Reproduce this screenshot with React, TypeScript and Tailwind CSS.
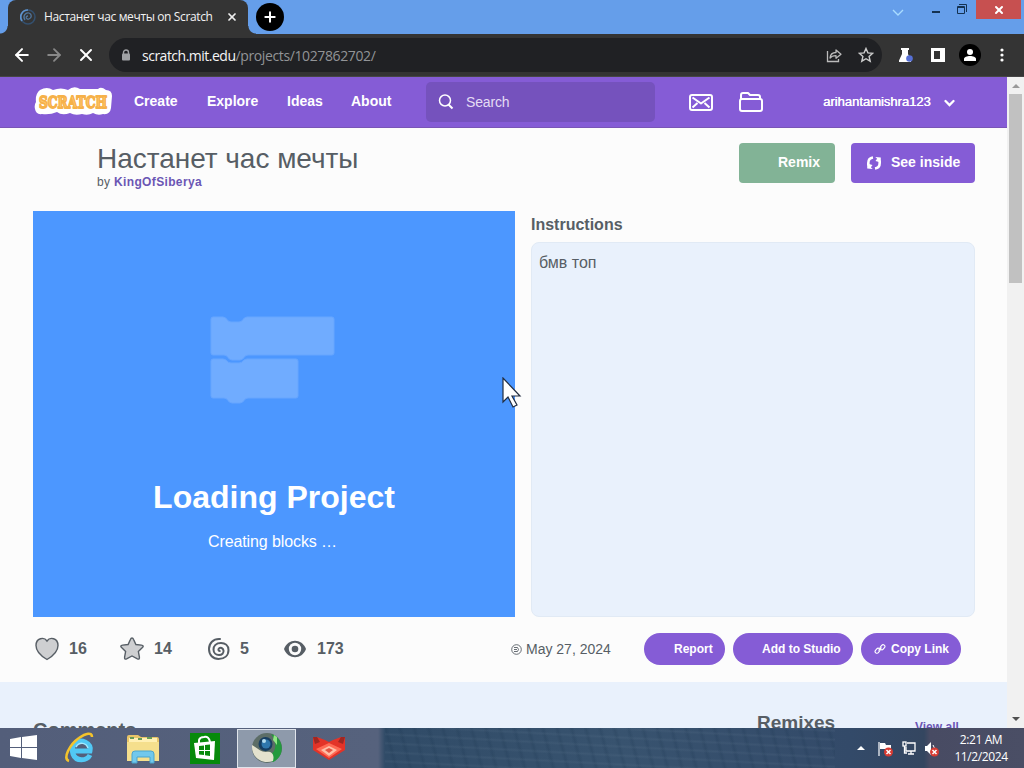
import type { ReactNode } from "react";
import { ArrowLeft, ArrowRight, X, Plus } from "lucide-react";

const stageFont = "font-['Liberation_Sans',Arial,sans-serif]";
const systemFont = "font-['Open_Sans','Noto_Sans',sans-serif]";

const TabStrip = () => (
  <div className="flex h-[34px] shrink-0 items-start bg-[#659eea]">
    <div className="flex h-[34px] w-[8px] items-end">
      <div className="h-2 w-2 bg-[radial-gradient(circle_at_0_0,#659eea_7px,#343434_8px)]" />
    </div>
    <div className="flex h-[34px] w-[240px] items-center rounded-t-[8px] bg-[#343434] pl-3">
      <svg width="16" height="16" viewBox="0 0 16 16" fill="none">
        <circle cx="8" cy="8" r="7" stroke="#34506f" strokeWidth="1.5" />
        <path d="M2 12A7 7 0 0 1 8 1" stroke="#5f92cc" strokeWidth="1.7" />
        <path d="M5 11c-3-4 1-8 4-7s3 5 0 6-4-3-1-3" stroke="#52779f" strokeWidth="1.3" />
      </svg>
      <span className="ml-2 w-[170px] whitespace-nowrap text-[12px] tracking-[-0.37px] text-[#f2f2f2]">
        Настанет час мечты on Scratch
      </span>
      <X className="ml-[12px]" size={12} strokeWidth={3.5} color="#eee" />
    </div>
    <div className="flex h-[34px] w-[8px] items-end">
      <div className="h-2 w-2 bg-[radial-gradient(circle_at_100%_0,#659eea_7px,#343434_8px)]" />
    </div>
    <div className="mt-[3px] flex h-7 w-7 items-center justify-center rounded-full bg-black">
      <Plus size={16} strokeWidth={3} color="white" />
    </div>
    <svg className="ml-auto mt-[9px]" width="12" height="8" viewBox="0 0 12 8" fill="none">
      <path d="M1 1l5 5 5-5" stroke="#a9dcff" strokeWidth="1.4" />
    </svg>
    <div className="ml-[28px] mt-[11px] h-[2px] w-[8px] bg-[#143252]" />
    <svg className="ml-[17px] mt-1" width="11" height="10" viewBox="0 0 11 10" fill="none" stroke="#143252">
      <path d="M.5 2.5h7v7h-7zM.5 3.5h7" />
      <path d="M2 .5h7.5V8" />
    </svg>
    <div className="ml-[8px] flex h-[19px] w-[45px] items-center justify-center bg-[#c75050]">
      <X size={12} strokeWidth={4} color="white" />
    </div>
    <div className="w-[3px]" />
  </div>
);

const AddressBar = () => (
  <div className="flex h-[43px] shrink-0 items-center border-b border-[#464646] bg-[#343434]">
    <ArrowLeft className="ml-[12px]" size={20} strokeWidth={2.4} color="white" />
    <ArrowRight className="ml-[12px]" size={20} strokeWidth={2.2} color="#888" />
    <X className="ml-[12px]" size={20} strokeWidth={2.4} color="white" />
    <div className="ml-[13px] flex h-[34px] w-[773px] items-center rounded-full bg-[#202124] pl-[12px]">
      <svg width="10" height="12" viewBox="0 0 10 12">
        <path d="M2.5 5V3.5a2.5 2.5 0 0 1 5 0V5" fill="none" stroke="#a0a2a5" strokeWidth="1.4" />
        <rect x="1" y="4.5" width="8" height="7" rx="1" fill="#a0a2a5" />
      </svg>
      <span className="ml-[11px] whitespace-nowrap text-[14px] text-[#929497]">
        <span className="tracking-[-0.5px] text-[#f5f5f5]">scratch.mit.edu</span>
        <span className="tracking-[-0.38px]">/projects/1027862702/</span>
      </span>
      <svg className="ml-auto" width="16" height="16" viewBox="0 0 16 16" fill="none" stroke="#bbb" strokeWidth="1.3">
        <path d="M1.5 4v10.5h11V12" />
        <path d="M4 11c.4-4 2.5-5.500 6-5.500V3l5 4.200-5 4V8.700C7.500 8.700 5.500 9 4 11z" strokeLinejoin="round" />
      </svg>
      <svg className="ml-[16px] mr-[8px]" width="16" height="16" viewBox="0 0 16 16" fill="none">
        <path d="M8 1.500l1.900 4.400 4.800.4-3.600 3.200 1.100 4.700L8 11.700l-4.200 2.500 1.100-4.700L1.300 6.300l4.800-.4z" stroke="#ccc" strokeWidth="1.400" />
      </svg>
    </div>
    <svg className="ml-[17px]" width="15" height="16" viewBox="0 0 15 16">
      <path d="M2 1h8v2H9v4l3 6.500V15H0v-1.500L3 7V3H2z" fill="white" />
      <circle cx="10.500" cy="11.500" r="3.300" fill="#566fd4" />
    </svg>
    <svg className="ml-[17px]" width="14" height="14" viewBox="0 0 14 14">
      <path d="M0 0h14v14H0zM3 3v8h6V3z" fill="white" fillRule="evenodd" />
    </svg>
    <div className="ml-[14px] flex h-[22px] w-[22px] items-center justify-center rounded-full bg-black">
      <svg width="14" height="14" viewBox="0 0 14 14" fill="white">
        <circle cx="7" cy="4" r="3" />
        <path d="M1 13v-2c0-4 12-4 12 0v2z" />
      </svg>
    </div>
    <svg className="ml-[19px]" width="4" height="14" viewBox="0 0 4 14" fill="white">
      <circle cx="2" cy="2" r="1.600" />
      <circle cx="2" cy="7" r="1.600" />
      <circle cx="2" cy="12" r="1.600" />
    </svg>
  </div>
);

const ScratchLogo = () => (
  <svg width="80" height="32" viewBox="0 0 80 32">
    <path
      d="M7 4q7-4 13 0 8-3 15 0 6-5 12-1h18q3-3 8 1 6 0 6 6l-1 12q-1 7-8 6-5 2-10-1-5 3-11 1-7 2-12-1-8 3-13-1-7 3-15 2-6 1-7-5-1-4 1-7-1-8 4-12z"
      fill="white"
    />
    <text
      x="6"
      y="22"
      textLength="68"
      lengthAdjust="spacingAndGlyphs"
      fontFamily="DejaVu Serif, serif"
      fontWeight="bold"
      fontSize="17"
      fill="#ffc76f"
      stroke="#f6b149"
      strokeWidth="1.800"
      strokeLinejoin="round"
    >
      SCRATCH
    </text>
  </svg>
);

const NavBar = () => (
  <nav className="flex h-[51px] items-center border-b border-[#7955b6] bg-[#855cd6] text-[14px] font-bold leading-5 text-white">
    <div className="ml-[33px] w-[101px] pb-px">
      <ScratchLogo />
    </div>
    <span className="w-[73px] pb-[2px]">Create</span>
    <span className="w-[80px] pb-[2px]">Explore</span>
    <span className="w-[64px] pb-[2px]">Ideas</span>
    <span className="w-[75px] pb-[2px]">About</span>
    <div className="flex h-10 w-[229px] items-center rounded-[5px] bg-[#7552bd] pl-[12px] font-normal text-[#e4dcf4]">
      <svg width="16" height="16" viewBox="0 0 16 16" fill="none" stroke="white" strokeWidth="1.500">
        <circle cx="7" cy="6.500" r="5.500" />
        <path d="M10.500 10.500l4 4" strokeWidth="2" />
      </svg>
      <span className="ml-[12px] tracking-[-0.15px]">Search</span>
    </div>
    <svg className="ml-[34px]" width="24" height="17" viewBox="0 0 24 17" fill="none" stroke="white" strokeWidth="2">
      <rect x="1" y="1" width="22" height="15" rx="2" />
      <path d="M3.500 3.500l8.500 6 8.500-6M3.500 13.500l5-4.500M20.500 13.500l-5-4.500" strokeLinejoin="round" />
    </svg>
    <svg className="ml-[26px]" width="24" height="20" viewBox="0 0 24 20" fill="none" stroke="white" strokeWidth="2" strokeLinejoin="round">
      <path d="M2 7V3q0-2 2-2h5l2 2h8q2 0 2 2v2" />
      <path d="M3 7h18q2 0 2 2v8q0 2-2 2H3q-2 0-2-2V9q0-2 2-2z" />
    </svg>
    <span className="ml-[60px] w-[121px] whitespace-nowrap text-[13px] font-normal [text-shadow:0.4px_0_0_white]">
      arihantamishra123
    </span>
    <svg className="mt-px" width="11" height="8" viewBox="0 0 11 8" fill="none">
      <path d="M1.500 2l4 4 4-4" stroke="white" strokeWidth="2.300" strokeLinecap="round" />
    </svg>
  </nav>
);

const ProjectHeader = () => (
  <div className="flex h-[83px] items-start pl-[97px]">
    <div className="w-[642px] pt-[14px]">
      <h1 className="h-[32px] whitespace-nowrap text-[28px] leading-[33px] tracking-[-0.03px]">Настанет час мечты</h1>
      <div className="text-[12px] leading-[17px] tracking-[0.35px]">
        by <span className="font-bold text-[#6b56b4]">KingOfSiberya</span>
      </div>
    </div>
    <div className="mt-[15px] h-10 w-24 rounded-[4px] bg-[#82b396] pl-[39px] text-[14px] font-bold leading-[38px] text-white">
      Remix
    </div>
    <div className="ml-4 mt-[15px] flex h-10 w-[124px] items-center rounded-[4px] bg-[#855cd6] pl-[15px] text-[14px] font-bold text-white">
      <svg width="16" height="14" viewBox="0 0 16 14" fill="none" stroke="white" strokeWidth="2.600">
        <path d="M7 1.500C3.500 2 2.300 4.500 2.300 7v2.500" />
        <path d="M1.200 7.500v5l5.500.5-1.800-1.800L6.500 9z" fill="white" stroke="none" />
        <path d="M9 12.500c3.500-.5 4.700-3 4.700-5.500V4.500" />
        <path d="M14.800 6.500v-5L9.300 1l1.800 1.800L9.500 5z" fill="white" stroke="none" />
      </svg>
      <span className="ml-[9px] whitespace-nowrap pb-[2px]">See inside</span>
    </div>
  </div>
);

const LoadingStage = () => (
  <div className="flex h-[406px] w-[482px] flex-col items-center bg-[#4c97ff] text-white">
    <svg className="mr-[3px] mt-[105px] shrink-0" width="126" height="91" viewBox="0 0 126 91">
      <g transform="translate(1 1)" fill="#70acff" stroke="#66a6ff">
        <path d="M2 0h10c4 0 4 5 8 5h8c4 0 4-5 8-5h85q2 0 2 2v34q0 2-2 2H37c-4 0-4 5-8 5h-8c-4 0-4-5-8-5H2q-2 0-2-2V2q0-2 2-2z" />
        <path d="M2 42h10c4 0 4 4 8 4h8c4 0 4-4 8-4h49q2 0 2 2v35q0 2-2 2H37c-4 0-4 5-8 5h-8c-4 0-4-5-8-5H2q-2 0-2-2V44q0-2 2-2z" />
      </g>
    </svg>
    <h2 className="mt-[71px] text-[32px] font-bold leading-[38px]">Loading Project</h2>
    <p className="mr-[3px] mt-[17px] text-[16px] leading-[18px] tracking-[-0.1px]">Creating blocks …</p>
  </div>
);

const Stat = ({ icon, count, width }: { icon: ReactNode; count: number; width: string }) => (
  <div className={`flex items-center gap-[9px] ${width}`}>
    {icon}
    <span>{count}</span>
  </div>
);

const ProjectStats = () => (
  <div className="flex h-[65px] items-center pb-px pl-[34px] text-[16px] font-bold">
    <Stat
      width="w-[85px]"
      count={16}
      icon={
        <svg width="26" height="24" viewBox="0 0 26 24">
          <path d="M13 4C10-.5 2 1 2 8.500c0 6 5 10.500 11 14 6-3.500 11-8 11-14C24 1 16-.5 13 4z" fill="#cecfd1" stroke="#575e65" strokeWidth="1.400" />
        </svg>
      }
    />
    <Stat
      width="w-[89px]"
      count={14}
      icon={
        <svg width="26" height="26" viewBox="0 0 26 26">
          <path d="M13 2q1 0 1.600 1.500l2.300 5 5.500.6q3 .4 1 2.500l-4 4 1 5.500q.3 2.700-2 1.700L13 20l-5.400 2.800q-2.300 1-2-1.700l1-5.500-4-4q-2-2.100 1-2.500l5.500-.6 2.300-5Q12 2 13 2z" fill="#cecfd1" stroke="#575e65" strokeWidth="1.400" />
        </svg>
      }
    />
    <Stat
      width="w-[75px]"
      count={5}
      icon={
        <svg width="23" height="24" viewBox="0 0 23 24" fill="none" stroke="#575e65" strokeWidth="2" strokeLinecap="round">
          <path d="M12 2C5 1.500 1 6.500 1 12c0 6 4 10 9.500 10 6 0 10-3.500 10-9 0-4.500-3.500-7-7.500-7-5 0-7.500 3-7.500 6.500s2.500 5.500 5.500 5.500 5-2 4.500-4.500C15 11 12.500 10 11 11.500c-1 1-.7 2.500.7 2.600" />
        </svg>
      }
    />
    <Stat
      width="w-[228px]"
      count={173}
      icon={
        <svg className="mr-px" width="24" height="20" viewBox="0 0 24 20">
          <path d="M1 10C5-1 19-1 23 10 19 21 5 21 1 10z" fill="#575e65" />
          <circle cx="12" cy="10" r="6.200" fill="#fcfcfc" />
          <circle cx="12" cy="10" r="3.300" fill="#575e65" />
        </svg>
      }
    />
    <div className="flex w-[133px] items-center text-[14px] font-normal">
      <svg className="mr-[4px]" width="11" height="11" viewBox="0 0 11 11" fill="none" stroke="#575e65">
        <circle cx="5.500" cy="5.500" r="4.800" strokeWidth=".9" />
        <path d="M3 3.500h3.500q2 2 0 4H3M3 5.500h3" strokeWidth=".9" />
      </svg>
      May 27, 2024
    </div>
    <div className="flex gap-2 whitespace-nowrap text-[12px] text-white">
      <div className="h-8 w-[81px] rounded-full bg-[#855cd6] pl-[30px] leading-[32px]">Report</div>
      <div className="h-8 w-[120px] rounded-full bg-[#855cd6] pl-[29px] leading-[32px]">Add to Studio</div>
      <div className="flex h-8 w-[100px] items-center rounded-full bg-[#855cd6] pl-[13px]">
        <svg className="mr-[5px]" width="12" height="12" viewBox="0 0 12 12" fill="none" stroke="white" strokeWidth="1.100">
          <rect x=".8" y="6" width="5.500" height="3.600" rx="1.800" transform="rotate(-50 3.500 7.800)" />
          <rect x="5.700" y="2.400" width="5.500" height="3.600" rx="1.800" transform="rotate(-50 8.500 4.200)" />
          <path d="M4.500 7.500l3-3" />
        </svg>
        <span className="pb-px">Copy Link</span>
      </div>
    </div>
  </div>
);

const ScrollBar = () => (
  <div className="flex w-[17px] flex-col items-center bg-[#f1f1f1]">
    <div className="mt-[7px] border-x-[4px] border-b-[4px] border-x-transparent border-b-[#999]" />
    <div className="mt-[6px] h-[189px] w-[13px] bg-[#c1c1c1]" />
    <div className="mb-[7px] mt-auto border-x-[4px] border-t-[4px] border-x-transparent border-t-[#505050]" />
  </div>
);

const ScratchPage = () => (
  <div className={`flex h-[651px] shrink-0 overflow-hidden bg-[#fcfcfc] text-[#575e65] ${stageFont}`}>
    <main className="h-[651px] w-[1007px] overflow-hidden">
      <NavBar />
      <ProjectHeader />
      <div className="flex pl-[33px]">
        <LoadingStage />
        <div className="ml-4 w-[444px]">
          <h3 className="h-[31px] pt-[4px] text-[16px] font-bold leading-[20px]">Instructions</h3>
          <div className="h-[375px] rounded-[8px] border border-[#e1eaf5] bg-[#e9f1fc] px-[7px] pt-[10px] text-[16px] leading-5">
            бмв топ
          </div>
        </div>
      </div>
      <ProjectStats />
      <section className="flex h-[46px] items-start overflow-hidden bg-[#e9f1fc] font-bold">
        <h3 className="ml-[33px] mt-[36px] w-[724px] text-[20px] leading-6">Comments</h3>
        <h3 className="mt-[29px] w-[158px] text-[19px] leading-6">Remixes</h3>
        <span className="mt-[37px] whitespace-nowrap text-[12px] leading-4 text-[#6b56b4]">View all</span>
      </section>
    </main>
    <ScrollBar />
  </div>
);

const WindowsIcon = () => (
  <svg width="28" height="26" viewBox="0 0 28 26" fill="white">
    <path d="M0 4l11-2v10H0zM12 2l15-2v12H12zM0 13h11v10L0 21zM12 13h15v12l-15-2z" />
  </svg>
);

const ExplorerIcon = () => (
  <svg width="32" height="32" viewBox="0 0 32 32" fill="none">
    <path d="M26 23c-3 6-14 7-17-1-3-9 5-15 12-12 4 2 6 5 5 9H10" stroke="#51c8f5" strokeWidth="5" />
    <path d="M12 15c3-5 10-5 12 1" stroke="#a4e9ff" strokeWidth="1.500" />
    <path d="M5 29C-2 27 6 12 15 6c7-5 13-6 13-1" stroke="#f4c32b" strokeWidth="2.600" />
  </svg>
);

const FolderIcon = () => (
  <svg width="32" height="30" viewBox="0 0 32 30">
    <path d="M0 3q0-2 2-2h9l3 2h16q2 0 2 2v22H0z" fill="#e8c568" />
    <path d="M2 4h28v6H2z" fill="#fff0b4" />
    <path d="M3 4h4m4 1h4m5-1h5" stroke="#679b57" strokeWidth="2" />
    <path d="M0 8h32v19H0z" fill="#f5df8d" />
    <path d="M5 29v-9q0-3 3-3h16q3 0 3 3v9h-4v-6H10v6z" fill="#71c8ec" stroke="#4ba5ce" />
  </svg>
);

const StoreIcon = () => (
  <svg width="30" height="31" viewBox="0 0 30 31">
    <path d="M0 0h30v31H0z" fill="#078a0b" />
    <path d="M4 10l21-2-1 19-18-2z" fill="white" />
    <path d="M9 10V7q1-3 5-3 5-1 6 5" fill="none" stroke="white" strokeWidth="2" />
    <path d="M9 13l5-.5V17H9zM15 12l5-.5V17h-5zM9 18h5v4l-5-.5zM15 18h5v5l-5-.700z" fill="#078a0b" />
  </svg>
);

const OrbIcon = () => (
  <svg width="32" height="32" viewBox="0 0 32 32">
    <circle cx="16" cy="16" r="15" fill="#5c6d67" />
    <path d="M20 2c14 4 14 23 2 28-3-2-3-5-3-7 7-4 7-13 1-21z" fill="#239a3d" />
    <path d="M23 3l3 2v8l-4-5z" fill="#91e785" />
    <path d="M1 13c-1 13 11 20 21 16 2-7-2-10-7-9-5 0-9-4-14-7z" fill="#e4e2ce" />
    <circle cx="14.500" cy="12" r="7" fill="#173e62" />
    <circle cx="15" cy="12" r="4.500" fill="#2f77ad" />
    <circle cx="13" cy="9" r="2" fill="#b3dcef" />
  </svg>
);

const FoxIcon = () => (
  <svg width="32" height="25" viewBox="0 0 32 25">
    <path d="M0 1h4l8 3 4 2 4-2 8-3h4v13L16 24 0 14z" fill="#e33328" />
    <path d="M0 1h4l3 5-5 2zM32 1h-4l-3 5 5 2z" fill="#9f2722" />
    <path d="M3 13l13-6 13 6-13 9z" fill="#ff6a54" />
    <path d="M8 14l8-4 8 4-8 6z" fill="#ffc0a8" />
    <path d="M12 14l4-2 4 2-4 3z" fill="#e35443" />
  </svg>
);

const TrayIcons = () => (
  <div className="flex items-center">
    <div className="border-x-[4px] border-b-[4px] border-x-transparent border-b-white" />
    <svg className="ml-[13px] mt-px" width="16" height="16" viewBox="0 0 16 16">
      <path d="M1 1v14" stroke="white" strokeWidth="1.200" />
      <path d="M2 2h5l1 2h5v6H8L7 8H2z" fill="white" />
      <circle cx="10.500" cy="11" r="4.500" fill="#d83b32" />
      <path d="M8.500 9l4 4m0-4l-4 4" stroke="white" strokeWidth="1.500" />
    </svg>
    <svg className="ml-[8px]" width="16" height="16" viewBox="0 0 16 16" fill="none" stroke="white" strokeWidth="1.300">
      <path d="M5 3h8v8H4V7M9 11v3M6 14h6M2.500 6v7H5" />
      <rect x="1" y="2" width="3" height="4" />
    </svg>
    <svg className="ml-[6px] mt-px" width="16" height="16" viewBox="0 0 16 16">
      <path d="M1 5h2l4-4v13l-4-4H1z" fill="white" />
      <path d="M9 4q3 3 0 7" fill="none" stroke="white" />
      <circle cx="10.500" cy="11" r="4.500" fill="#d83b32" />
      <path d="M8.500 9l4 4m0-4l-4 4" stroke="white" strokeWidth="1.500" />
    </svg>
  </div>
);

const TaskBar = () => (
  <footer className="flex h-10 shrink-0 items-center overflow-hidden bg-[linear-gradient(90deg,#535e7a_0px,#56627d_378px,#304b67_385px,#38536f_620px,#334a69_850px,#344660_924px,#484b63_930px,#4a4e65_1024px)]">
    <div className="ml-[10px] w-[54px]"><WindowsIcon /></div>
    <div className="w-[63px]"><ExplorerIcon /></div>
    <div className="w-[63px] pt-[2px]"><FolderIcon /></div>
    <div className="w-[47px]"><StoreIcon /></div>
    <div className="flex h-[39px] w-[59px] items-center justify-center border border-[#dfe4eb] bg-[#8e9aab]">
      <OrbIcon />
    </div>
    <div className="ml-[17px]"><FoxIcon /></div>
    {/* Faint rows of keys on the desktop backdrop */}
    <div className="ml-[40px] h-[64px] w-[450px] shrink-0 skew-y-[3deg] bg-[repeating-linear-gradient(0deg,transparent_0px,transparent_5px,#8298ac18_7px,transparent_9px),repeating-linear-gradient(75deg,transparent_0px,transparent_8px,#19334d30_11px,transparent_14px)]" />
    <div className="ml-auto"><TrayIcons /></div>
    <div className="ml-[6px] mr-[8px] w-[70px] whitespace-nowrap text-center text-[12px] leading-[17px] tracking-[-0.4px] text-white">
      <div>2:21 AM</div>
      <div>11/2/2024</div>
    </div>
  </footer>
);

const MouseCursor = () => (
  <svg className="absolute left-[502px] top-[377px]" width="20" height="32" viewBox="0 0 20 32">
    <path d="M1 1v24l5-5 5 10 4-2-5-9h8z" fill="white" stroke="#222d40" strokeWidth="1.200" />
  </svg>
);

const App = () => (
  <div className={`relative flex h-[768px] w-[1024px] flex-col overflow-hidden ${systemFont}`}>
    <TabStrip />
    <AddressBar />
    <ScratchPage />
    <TaskBar />
    <MouseCursor />
  </div>
);

export default App;
